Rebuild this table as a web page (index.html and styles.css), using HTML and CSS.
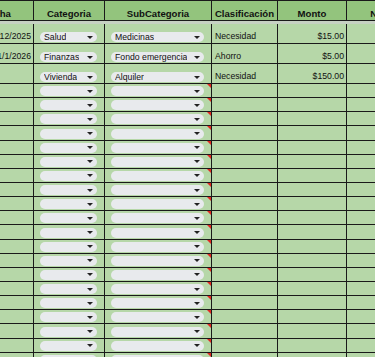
FILE: index.html
```html
<!DOCTYPE html>
<html lang="es">
<head>
<meta charset="utf-8">
<title>Gastos</title>
<link rel="stylesheet" href="styles.css">
</head>
<body>
<div class="sheet">
  <div class="row head">
    <div class="cell">Fecha</div>
    <div class="cell">Categoria</div>
    <div class="cell">SubCategoria</div>
    <div class="cell">Clasificación</div>
    <div class="cell">Monto</div>
    <div class="cell">Notas</div>
  </div>
  <div class="freeze"></div>

  <div class="row tall">
    <div class="cell date">31/12/2025</div>
    <div class="cell pick"><span class="chip"><span class="val">Salud</span><i class="arrow"></i></span></div>
    <div class="cell pick"><span class="chip"><span class="val">Medicinas</span><i class="arrow"></i></span></div>
    <div class="cell txt">Necesidad</div>
    <div class="cell num">$15.00</div>
    <div class="cell"></div>
  </div>
  <div class="row tall">
    <div class="cell date">1/1/2026</div>
    <div class="cell pick"><span class="chip"><span class="val">Finanzas</span><i class="arrow"></i></span></div>
    <div class="cell pick"><span class="chip"><span class="val">Fondo emergencia</span><i class="arrow"></i></span></div>
    <div class="cell txt">Ahorro</div>
    <div class="cell num">$5.00</div>
    <div class="cell"></div>
  </div>
  <div class="row tall">
    <div class="cell date"></div>
    <div class="cell pick"><span class="chip"><span class="val">Vivienda</span><i class="arrow"></i></span></div>
    <div class="cell pick"><span class="chip"><span class="val">Alquiler</span><i class="arrow"></i></span></div>
    <div class="cell txt">Necesidad</div>
    <div class="cell num">$150.00</div>
    <div class="cell"></div>
  </div>

  <div class="row"><div class="cell"></div><div class="cell pick"><span class="chip"><i class="arrow"></i></span></div><div class="cell pick invalid"><span class="chip"><i class="arrow"></i></span></div><div class="cell"></div><div class="cell"></div><div class="cell"></div></div>
  <div class="row"><div class="cell"></div><div class="cell pick"><span class="chip"><i class="arrow"></i></span></div><div class="cell pick invalid"><span class="chip"><i class="arrow"></i></span></div><div class="cell"></div><div class="cell"></div><div class="cell"></div></div>
  <div class="row"><div class="cell"></div><div class="cell pick"><span class="chip"><i class="arrow"></i></span></div><div class="cell pick invalid"><span class="chip"><i class="arrow"></i></span></div><div class="cell"></div><div class="cell"></div><div class="cell"></div></div>
  <div class="row"><div class="cell"></div><div class="cell pick"><span class="chip"><i class="arrow"></i></span></div><div class="cell pick invalid"><span class="chip"><i class="arrow"></i></span></div><div class="cell"></div><div class="cell"></div><div class="cell"></div></div>
  <div class="row"><div class="cell"></div><div class="cell pick"><span class="chip"><i class="arrow"></i></span></div><div class="cell pick invalid"><span class="chip"><i class="arrow"></i></span></div><div class="cell"></div><div class="cell"></div><div class="cell"></div></div>
  <div class="row"><div class="cell"></div><div class="cell pick"><span class="chip"><i class="arrow"></i></span></div><div class="cell pick invalid"><span class="chip"><i class="arrow"></i></span></div><div class="cell"></div><div class="cell"></div><div class="cell"></div></div>
  <div class="row"><div class="cell"></div><div class="cell pick"><span class="chip"><i class="arrow"></i></span></div><div class="cell pick invalid"><span class="chip"><i class="arrow"></i></span></div><div class="cell"></div><div class="cell"></div><div class="cell"></div></div>
  <div class="row"><div class="cell"></div><div class="cell pick"><span class="chip"><i class="arrow"></i></span></div><div class="cell pick invalid"><span class="chip"><i class="arrow"></i></span></div><div class="cell"></div><div class="cell"></div><div class="cell"></div></div>
  <div class="row"><div class="cell"></div><div class="cell pick"><span class="chip"><i class="arrow"></i></span></div><div class="cell pick invalid"><span class="chip"><i class="arrow"></i></span></div><div class="cell"></div><div class="cell"></div><div class="cell"></div></div>
  <div class="row"><div class="cell"></div><div class="cell pick"><span class="chip"><i class="arrow"></i></span></div><div class="cell pick invalid"><span class="chip"><i class="arrow"></i></span></div><div class="cell"></div><div class="cell"></div><div class="cell"></div></div>
  <div class="row"><div class="cell"></div><div class="cell pick"><span class="chip"><i class="arrow"></i></span></div><div class="cell pick invalid"><span class="chip"><i class="arrow"></i></span></div><div class="cell"></div><div class="cell"></div><div class="cell"></div></div>
  <div class="row"><div class="cell"></div><div class="cell pick"><span class="chip"><i class="arrow"></i></span></div><div class="cell pick invalid"><span class="chip"><i class="arrow"></i></span></div><div class="cell"></div><div class="cell"></div><div class="cell"></div></div>
  <div class="row"><div class="cell"></div><div class="cell pick"><span class="chip"><i class="arrow"></i></span></div><div class="cell pick invalid"><span class="chip"><i class="arrow"></i></span></div><div class="cell"></div><div class="cell"></div><div class="cell"></div></div>
  <div class="row"><div class="cell"></div><div class="cell pick"><span class="chip"><i class="arrow"></i></span></div><div class="cell pick invalid"><span class="chip"><i class="arrow"></i></span></div><div class="cell"></div><div class="cell"></div><div class="cell"></div></div>
  <div class="row"><div class="cell"></div><div class="cell pick"><span class="chip"><i class="arrow"></i></span></div><div class="cell pick invalid"><span class="chip"><i class="arrow"></i></span></div><div class="cell"></div><div class="cell"></div><div class="cell"></div></div>
  <div class="row"><div class="cell"></div><div class="cell pick"><span class="chip"><i class="arrow"></i></span></div><div class="cell pick invalid"><span class="chip"><i class="arrow"></i></span></div><div class="cell"></div><div class="cell"></div><div class="cell"></div></div>
  <div class="row"><div class="cell"></div><div class="cell pick"><span class="chip"><i class="arrow"></i></span></div><div class="cell pick invalid"><span class="chip"><i class="arrow"></i></span></div><div class="cell"></div><div class="cell"></div><div class="cell"></div></div>
  <div class="row"><div class="cell"></div><div class="cell pick"><span class="chip"><i class="arrow"></i></span></div><div class="cell pick invalid"><span class="chip"><i class="arrow"></i></span></div><div class="cell"></div><div class="cell"></div><div class="cell"></div></div>
  <div class="row"><div class="cell"></div><div class="cell pick"><span class="chip"><i class="arrow"></i></span></div><div class="cell pick invalid"><span class="chip"><i class="arrow"></i></span></div><div class="cell"></div><div class="cell"></div><div class="cell"></div></div>
  <div class="row"><div class="cell"></div><div class="cell pick"><span class="chip"><i class="arrow"></i></span></div><div class="cell pick invalid"><span class="chip"><i class="arrow"></i></span></div><div class="cell"></div><div class="cell"></div><div class="cell"></div></div>
</div>
</body>
</html>
```
FILE: styles.css
```css
html, body {
  margin: 0;
  padding: 0;
  overflow: hidden;
  background: #b6d7a8;
}

body {
  font-family: "Liberation Sans", Arial, sans-serif;
  color: #111;
}

.sheet {
  margin-left: -39px;
  width: 460px;
}

.row {
  display: grid;
  grid-template-columns: 73px 71px 107px 66px 69px 74px;
  height: 14.15px;
}

.row.tall {
  height: 20px;
}

.cell {
  box-sizing: border-box;
  border-right: 1px solid #1a1a1a;
  border-bottom: 1px solid #1a1a1a;
  display: flex;
  align-items: flex-end;
  overflow: hidden;
  white-space: nowrap;
  font-size: 8.7px;
  line-height: 10px;
  padding: 0 2px 2px 3px;
  min-width: 0;
}

.head {
  height: 21px;
}

.head .cell {
  background: #93c47d;
  border-top: 1px solid #1a1a1a;
  font-weight: bold;
  font-size: 9.6px;
  line-height: 11px;
  justify-content: center;
  padding: 0 0 1px 0;
  color: #111;
}

.freeze {
  height: 3px;
  background: #c6d1c2;
}

.date {
  justify-content: flex-end;
  padding-right: 2px;
}

.num {
  justify-content: flex-end;
  padding-right: 2px;
}

.txt {
  padding-left: 3px;
}

.cell.pick {
  padding: 0 7px 1px 6px;
  position: relative;
}

.chip {
  flex: 1;
  height: 10px;
  border-radius: 5px;
  background: #e8eaed;
  display: flex;
  align-items: center;
  justify-content: space-between;
  padding: 0 4px 0 4px;
  box-sizing: border-box;
  font-size: 8.7px;
  line-height: 10px;
  color: #111;
}

.chip .val {
  overflow: hidden;
}

.arrow {
  margin-left: auto;
  width: 0;
  height: 0;
  border-left: 3px solid transparent;
  border-right: 3px solid transparent;
  border-top: 3px solid #222;
}

.invalid::after {
  content: "";
  position: absolute;
  top: 0;
  right: 0;
  width: 0;
  height: 0;
  border-left: 4px solid transparent;
  border-top: 4px solid #e0271f;
}
```
